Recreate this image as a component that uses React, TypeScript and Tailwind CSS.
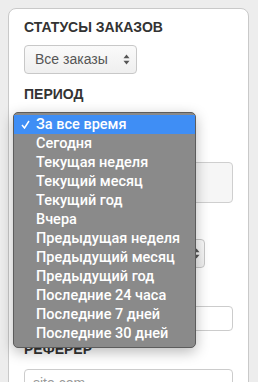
import React from 'react';

const periods = [
  'За все время',
  'Сегодня',
  'Текущая неделя',
  'Текущий месяц',
  'Текущий год',
  'Вчера',
  'Предыдущая неделя',
  'Предыдущий месяц',
  'Предыдущий год',
  'Последние 24 часа',
  'Последние 7 дней',
  'Последние 30 дней',
];

function Arrows() {
  return (
    <svg width="7" height="11" viewBox="0 0 7 11" className="shrink-0">
      <path d="M3.5 0.5 L6.5 4.2 L0.5 4.2 Z" fill="#555" />
      <path d="M3.5 10.5 L6.5 6.8 L0.5 6.8 Z" fill="#555" />
    </svg>
  );
}

function Heading({ children, className = '' }: { children: React.ReactNode; className?: string }) {
  return (
    <div className={`text-[14px] leading-5 font-bold uppercase text-[#333] ${className}`}>{children}</div>
  );
}

export default function App() {
  return (
    <div
      className="relative h-[382px] w-[258px] overflow-hidden bg-[#ededed] pl-2 pt-2"
      style={{ fontFamily: '"Liberation Sans", Arial, sans-serif' }}
    >
      {/* filter card */}
      <div className="h-[420px] w-[241px] rounded-lg border border-[#c9c9c9] bg-white px-[15px] pt-2">
        <Heading>Статусы заказов</Heading>
        <div className="mt-2 flex h-[29px] w-[113px] items-center justify-between rounded-[4px] border border-[#c8c8c8] bg-gradient-to-b from-[#fafafa] to-[#efefef] pl-[10px] pr-[6px] text-[14px] text-[#555]">
          <span>Все заказы</span>
          <Arrows />
        </div>

        <Heading className="mt-[10px]">Период</Heading>
        {/* the select under the open menu */}
        <div className="mt-2 flex h-[29px] w-[140px] items-center justify-end rounded-[4px] border border-[#c8c8c8] bg-[#f5f5f5] pr-[6px]">
          <Arrows />
        </div>

        <div className="mt-[21px] h-[41px] w-full rounded-[4px] border border-[#cfcfcf] bg-[#f6f6f6]" />

        <div className="mt-[36px] flex h-[29px] w-[181px] items-center justify-end rounded-[4px] border border-[#c8c8c8] bg-gradient-to-b from-[#fafafa] to-[#efefef] pr-[4px]">
          <Arrows />
        </div>

        <div className="mt-[38px] h-[25px] w-full rounded-[4px] border border-[#cccccc] bg-white" />

        <Heading className="mt-[8px]">Реферер</Heading>
        <div className="mt-[10px] h-[28px] w-full rounded-[4px] border border-[#cccccc] bg-white px-[8px] pt-[3px] text-[14px] leading-5 text-[#999]">
          site.com
        </div>
      </div>

      {/* open native select menu */}
      <div
        className="absolute left-[13px] top-[112px] w-[183px] rounded-[5px] border border-[#5c5c5c] bg-[#8a8a8a] pt-[2px] pb-[4px] shadow-[0_4px_14px_rgba(0,0,0,0.28)]"
        style={{ fontFamily: 'Roboto, "Liberation Sans", Arial, sans-serif' }}
      >
        {periods.map((p, i) => (
          <div
            key={p}
            className={`flex h-[19px] items-center text-[14.5px] font-medium text-white ${i === 0 ? 'bg-[#3f8ef5]' : ''}`}
          >
            <span className="flex w-[22px] justify-end pr-[6px]">
              {i === 0 && (
                <svg width="9" height="9" viewBox="0 0 9 9">
                  <path d="M1 5 L3.5 8 L8 1" fill="none" stroke="white" strokeWidth="1.5" />
                </svg>
              )}
            </span>
            <span>{p}</span>
          </div>
        ))}
      </div>
    </div>
  );
}
